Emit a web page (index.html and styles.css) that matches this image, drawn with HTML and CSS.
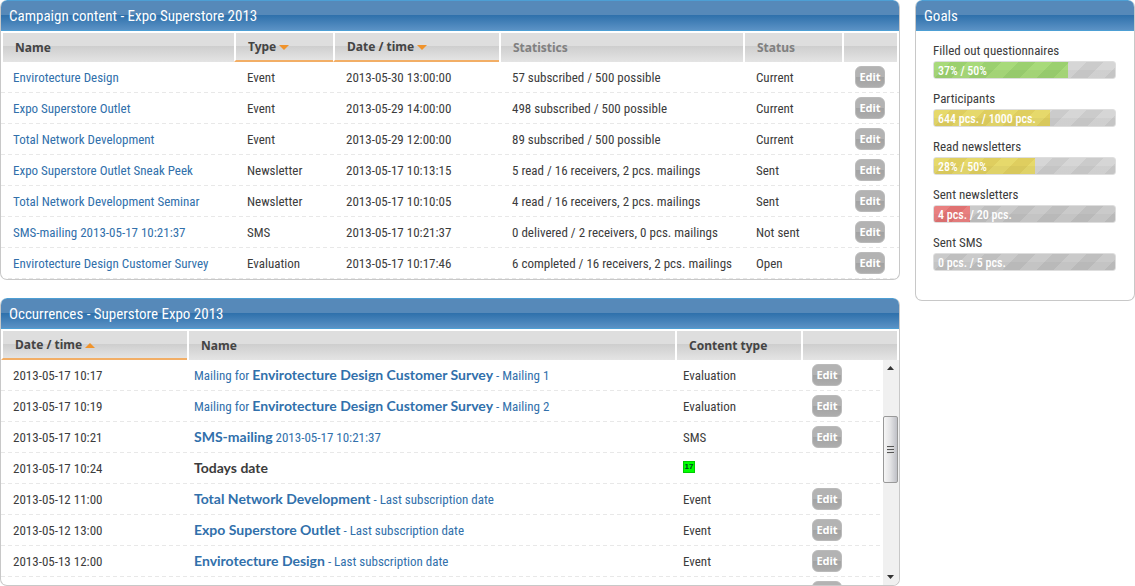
FILE: index.html
```
<!DOCTYPE html>
<html lang="en">
<head>
<meta charset="utf-8">
<title>Campaign content - Expo Superstore 2013</title>
<link rel="stylesheet" href="styles.css">
</head>
<body>
<main class="layout">
  <div class="content">
    <section class="panel">
      <h2 class="panel-title">Campaign content - Expo Superstore 2013</h2>
      <table class="grid campaign">
        <colgroup><col><col class="c-type"><col class="c-date"><col class="c-stat"><col class="c-status"><col class="c-edit"></colgroup>
        <thead>
          <tr>
            <th>Name</th>
            <th class="sorted">Type <span class="arrow down"></span></th>
            <th class="sorted">Date / time <span class="arrow down"></span></th>
            <th class="muted">Statistics</th>
            <th class="muted">Status</th>
            <th></th>
          </tr>
        </thead>
        <tbody>
          <tr><td><a href="#">Envirotecture Design</a></td><td>Event</td><td>2013-05-30 13:00:00</td><td>57 subscribed / 500 possible</td><td>Current</td><td><button class="edit">Edit</button></td></tr>
          <tr><td><a href="#">Expo Superstore Outlet</a></td><td>Event</td><td>2013-05-29 14:00:00</td><td>498 subscribed / 500 possible</td><td>Current</td><td><button class="edit">Edit</button></td></tr>
          <tr><td><a href="#">Total Network Development</a></td><td>Event</td><td>2013-05-29 12:00:00</td><td>89 subscribed / 500 possible</td><td>Current</td><td><button class="edit">Edit</button></td></tr>
          <tr><td><a href="#">Expo Superstore Outlet Sneak Peek</a></td><td>Newsletter</td><td>2013-05-17 10:13:15</td><td>5 read / 16 receivers, 2 pcs. mailings</td><td>Sent</td><td><button class="edit">Edit</button></td></tr>
          <tr><td><a href="#">Total Network Development Seminar</a></td><td>Newsletter</td><td>2013-05-17 10:10:05</td><td>4 read / 16 receivers, 2 pcs. mailings</td><td>Sent</td><td><button class="edit">Edit</button></td></tr>
          <tr><td><a href="#">SMS-mailing 2013-05-17 10:21:37</a></td><td>SMS</td><td>2013-05-17 10:21:37</td><td>0 delivered / 2 receivers, 0 pcs. mailings</td><td>Not sent</td><td><button class="edit">Edit</button></td></tr>
          <tr><td><a href="#">Envirotecture Design Customer Survey</a></td><td>Evaluation</td><td>2013-05-17 10:17:46</td><td>6 completed / 16 receivers, 2 pcs. mailings</td><td>Open</td><td><button class="edit">Edit</button></td></tr>
        </tbody>
      </table>
    </section>

    <section class="panel">
      <h2 class="panel-title">Occurrences - Superstore Expo 2013</h2>
      <table class="grid">
        <colgroup><col class="o-date"><col><col class="o-type"><col class="o-last"></colgroup>
        <thead>
          <tr>
            <th class="sorted">Date / time <span class="arrow up"></span></th>
            <th>Name</th>
            <th>Content type</th>
            <th></th>
          </tr>
        </thead>
      </table>
      <div class="scroller">
        <div class="viewport">
          <table class="grid occurrences">
            <colgroup><col class="o-when"><col><col class="o-kind"><col class="o-edit"></colgroup>
            <tbody>
              <tr><td>2013-05-17 10:17</td><td><a href="#">Mailing for <b>Envirotecture Design Customer Survey</b> - Mailing 1</a></td><td>Evaluation</td><td><button class="edit">Edit</button></td></tr>
              <tr><td>2013-05-17 10:19</td><td><a href="#">Mailing for <b>Envirotecture Design Customer Survey</b> - Mailing 2</a></td><td>Evaluation</td><td><button class="edit">Edit</button></td></tr>
              <tr><td>2013-05-17 10:21</td><td><a href="#"><b>SMS-mailing</b> 2013-05-17 10:21:37</a></td><td>SMS</td><td><button class="edit">Edit</button></td></tr>
              <tr><td>2013-05-17 10:24</td><td><b>Todays date</b></td><td><span class="day">17</span></td><td></td></tr>
              <tr><td>2013-05-12 11:00</td><td><a href="#"><b>Total Network Development</b> - Last subscription date</a></td><td>Event</td><td><button class="edit">Edit</button></td></tr>
              <tr><td>2013-05-12 13:00</td><td><a href="#"><b>Expo Superstore Outlet</b> - Last subscription date</a></td><td>Event</td><td><button class="edit">Edit</button></td></tr>
              <tr><td>2013-05-13 12:00</td><td><a href="#"><b>Envirotecture Design</b> - Last subscription date</a></td><td>Event</td><td><button class="edit">Edit</button></td></tr>
              <tr><td></td><td></td><td></td><td><button class="edit" aria-label="Edit"></button></td></tr>
            </tbody>
          </table>
        </div>
        <div class="scrollbar">
          <svg class="scroll-arrow" viewBox="0 0 15 17"><path d="M4 10L7.500 6L11 10Z" fill="#333"/></svg>
          <div class="track"><div class="thumb"><i></i><i></i><i></i></div></div>
          <svg class="scroll-arrow" viewBox="0 0 15 17"><path d="M4 7L7.500 11L11 7Z" fill="#333"/></svg>
        </div>
      </div>
    </section>
  </div>

  <aside class="panel goals">
    <h2 class="panel-title">Goals</h2>
    <div class="goal-list">
      <div class="goal"><span>Filled out questionnaires</span><div class="bar"><div class="fill green" style="width:74%"></div><span class="value">37% / 50%</span></div></div>
      <div class="goal"><span>Participants</span><div class="bar"><div class="fill yellow" style="width:64%"></div><span class="value">644 pcs. / 1000 pcs.</span></div></div>
      <div class="goal"><span>Read newsletters</span><div class="bar"><div class="fill yellow" style="width:56%"></div><span class="value">28% / 50%</span></div></div>
      <div class="goal"><span>Sent newsletters</span><div class="bar dark"><div class="fill red" style="width:20%"></div><span class="value">4 pcs. / 20 pcs.</span></div></div>
      <div class="goal"><span>Sent SMS</span><div class="bar dark"><span class="value">0 pcs. / 5 pcs.</span></div></div>
    </div>
  </aside>
</main>
</body>
</html>
```
FILE: styles.css
```
* { box-sizing: border-box; }
body {
  margin: 0;
  background: #fff;
  color: #3c3c3c;
  font: 13px/20px "Ubuntu Condensed", "Roboto Condensed", Roboto, sans-serif;
}
a { color: #3170ab; text-decoration: none; }
b { font-family: Lato, sans-serif; font-size: 14px; font-weight: 700; }

.layout { display: flex; align-items: flex-start; gap: 15px; }
.content { flex: 1; min-width: 0; display: flex; flex-direction: column; gap: 18px; }

.panel {
  border: 1px solid #c8c8c8;
  border-top: 0;
  border-radius: 7px;
  overflow: hidden;
}
.panel-title {
  margin: 0 -1px;
  height: 31px;
  padding: 0 8px;
  border: 1px solid #4d9fd4;
  border-radius: 7px 7px 0 0;
  background: linear-gradient(#5689b9 0 14px, #2e70ab 14px, #5b92c5 100%);
  color: #fff;
  font-size: 15px;
  font-weight: 400;
  line-height: 30px;
}

.grid { width: 100%; table-layout: fixed; border-collapse: separate; border-spacing: 0; }
.grid th {
  height: 31px;
  padding: 0 12px;
  border: solid #fff;
  border-width: 2px 0 0 2px;
  background: linear-gradient(#dedede 0 13px, #cecece 13px, #e4e4e4 100%);
  background-clip: padding-box;
  color: #444;
  font: 700 12px/26px "Noto Sans", sans-serif;
  text-align: left;
}
.grid th:last-child { border-right-width: 2px; }
.grid th.sorted { border-bottom: 2px solid #f2ae66; line-height: 24px; }
.grid th.muted { color: #808080; }
.arrow { display: inline-block; border: solid transparent; border-width: 0 5px; vertical-align: 1px; }
.arrow.down { border-top: 5px solid #f0932b; }
.arrow.up { border-bottom: 5px solid #f0932b; }

.grid tbody tr { background: repeating-linear-gradient(90deg, #e8e8e8 0 4px, transparent 4px 7px) left bottom / 100% 1px no-repeat; }
.grid td { height: 31px; padding: 0 0 0 13px; white-space: nowrap; }
.grid td:first-child { padding-left: 12px; }
.edit {
  display: block;
  width: 30px;
  height: 22px;
  margin: 0 0 2px;
  padding: 0;
  border: 1px solid #bababa;
  border-radius: 6px;
  background: linear-gradient(#b3b3b3 0 50%, #a2a2a2 50%, #adadad 100%);
  color: #fff;
  font: 700 11px/18px "Noto Sans", sans-serif;
}

.c-type { width: 99px; }
.c-date { width: 166px; }
.c-stat { width: 244px; }
.c-status { width: 99px; }
.c-edit { width: 57px; }

.o-date { width: 186px; }
.o-type { width: 126px; }
.o-last { width: 98px; }
.o-when { width: 180px; }
.o-kind { width: 129px; }
.o-edit { width: 84px; }

.scroller { display: flex; height: 225px; }
.viewport { flex: 1; overflow: hidden; }
.scrollbar { display: flex; flex-direction: column; width: 16px; padding-right: 1px; background: #f0f0f0; }
.scroll-arrow { display: block; width: 15px; height: 17px; }
.track { flex: 1; padding-top: 39px; }
.thumb {
  display: flex;
  flex-direction: column;
  align-items: center;
  justify-content: center;
  gap: 1px;
  height: 67px;
  border: 1px solid #999;
  border-radius: 2px;
  background: linear-gradient(90deg, #f6f6f6, #e2e2e4 50%, #bfc0c6);
}
.thumb i { width: 7px; height: 2px; background: #555; border-bottom: 1px solid #ddd; }
.day {
  display: block;
  width: 12px;
  height: 12px;
  margin-bottom: 3px;
  border: 1px solid #0c0;
  background: #0f0;
  color: #042;
  font: 700 8px/10px "Liberation Sans", sans-serif;
  text-align: center;
}

.goals { width: 220px; }
.goal-list { display: flex; flex-direction: column; gap: 10px; padding: 10px 18px 29px 17px; }
.goal > span { display: block; height: 20px; }
.bar {
  position: relative;
  height: 18px;
  border: 1px solid #dedede;
  border-radius: 3px;
  overflow: hidden;
  background: linear-gradient(transparent 50%, rgba(0, 0, 0, .03) 50%), repeating-linear-gradient(135deg, #d6d6d6 0 12px, #cbcbcb 12px 24px);
}
.bar.dark { background: linear-gradient(transparent 50%, rgba(0, 0, 0, .03) 50%), repeating-linear-gradient(135deg, #cacaca 0 12px, #bfbfbf 12px 24px); }
.fill { height: 100%; }
.green { background: linear-gradient(transparent 50%, rgba(0, 0, 0, .03) 50%), repeating-linear-gradient(135deg, #a8da7a 0 12px, #9bd06f 12px 24px); }
.yellow { background: linear-gradient(transparent 50%, rgba(0, 0, 0, .03) 50%), repeating-linear-gradient(135deg, #e6d96b 0 12px, #dfce5f 12px 24px); }
.red { background: linear-gradient(transparent 50%, rgba(0, 0, 0, .03) 50%), repeating-linear-gradient(135deg, #e98080 0 12px, #e07272 12px 24px); }
.value {
  position: absolute;
  inset: 0 4px;
  color: #fff;
  font-size: 12px;
  font-weight: 500;
  line-height: 18px;
}
```
